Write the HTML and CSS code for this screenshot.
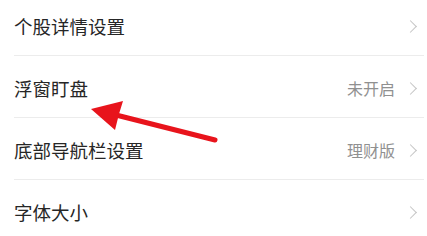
FILE: index.html
```html
<!DOCTYPE html>
<html lang="zh">
<head>
<meta charset="utf-8">
<link rel="stylesheet" href="styles.css">
</head>
<body>
<div class="page">
  <ul class="list">
    <li class="row"><span class="label">个股详情设置</span><span class="right"><span class="chev"></span></span></li>
    <li class="row"><span class="label">浮窗盯盘</span><span class="right"><span class="value">未开启</span><span class="chev"></span></span></li>
    <li class="row"><span class="label">底部导航栏设置</span><span class="right"><span class="value">理财版</span><span class="chev"></span></span></li>
    <li class="row"><span class="label">字体大小</span><span class="right"><span class="chev"></span></span></li>
  </ul>
  <svg class="arrow" width="427" height="236" viewBox="0 0 427 236">
    <line x1="215" y1="140" x2="116" y2="115" stroke="#e8141c" stroke-width="5" stroke-linecap="round"/>
    <polygon points="91,109 123,101 119,114 115,130" fill="#e8141c"/>
  </svg>
</div>
</body>
</html>
```
FILE: styles.css
```css
html, body {
  margin: 0;
  padding: 0;
  background: #ffffff;
}
.page {
  position: relative;
  width: 427px;
  height: 236px;
  overflow: hidden;
  font-family: "Noto Sans CJK SC", "Noto Sans", sans-serif;
}
.list {
  list-style: none;
  margin: -6px 0 0 0;
  padding: 0;
}
.row {
  display: flex;
  align-items: center;
  justify-content: space-between;
  height: 61px;
  margin-left: 14px;
  margin-right: 3px;
  border-bottom: 1px solid #ececec;
  box-sizing: content-box;
}
.label {
  font-size: 18.5px;
  color: #262626;
  line-height: 1;
  padding-top: 3px;
}
.right {
  display: flex;
  align-items: center;
  gap: 11px;
  padding-right: 6px;
  padding-top: 3px;
}
.value {
  font-size: 16px;
  color: #909090;
  line-height: 1;
}
.chev {
  width: 8px;
  height: 8px;
  border-top: 1.6px solid #c4c4c4;
  border-right: 1.6px solid #c4c4c4;
  transform: rotate(45deg);
  margin-right: 3px;
}
.arrow {
  position: absolute;
  left: 0;
  top: 0;
  pointer-events: none;
}
```
